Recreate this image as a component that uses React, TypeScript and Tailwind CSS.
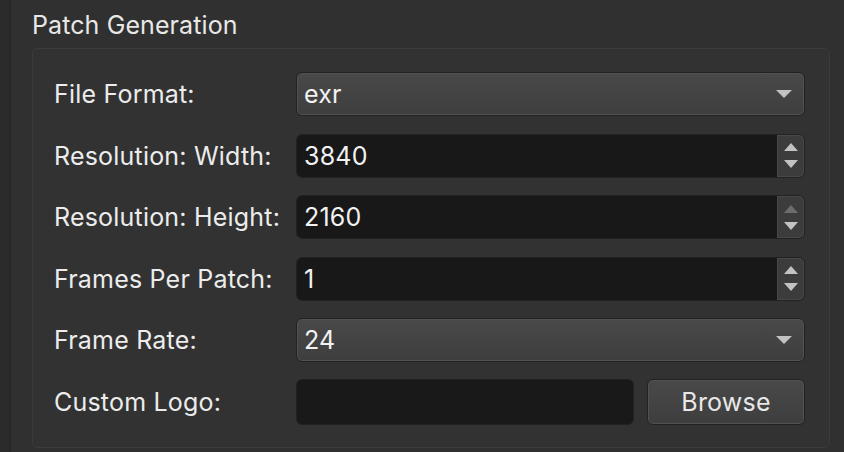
import React from "react";

const font = { fontFamily: "Inter, 'Open Sans', 'Liberation Sans', sans-serif" };

const Label: React.FC<{ text: string }> = ({ text }) => (
  <div className="w-[242px] shrink-0 text-[25px] leading-[28px] tracking-[0.2px] text-[#ececec]">{text}</div>
);

const Combo: React.FC<{ value: string }> = ({ value }) => (
  <div className="flex h-[44px] flex-1 items-center justify-between rounded-[6px] border border-[#222222] bg-gradient-to-b from-[#494949] to-[#3e3e3e] pl-[7px] pr-[12px] shadow-[inset_0_0_0_1px_#525252]">
    <span className="text-[25px] leading-[28px] tracking-[0.2px] text-[#f2f2f2]">{value}</span>
    <svg width="16" height="8" viewBox="0 0 16 8">
      <path d="M0 0 H16 L8 8 Z" fill="#c2c2c2" />
    </svg>
  </div>
);

const Spin: React.FC<{ value: string; upDisabled?: boolean }> = ({ value, upDisabled }) => (
  <div className="flex h-[44px] flex-1 overflow-hidden rounded-[6px] border border-[#222222]">
    <div className="flex flex-1 items-center bg-[#181818] pl-[7px] text-[25px] leading-[28px] tracking-[0.2px] text-[#f2f2f2]">
      {value}
    </div>
    <div className="flex w-[27px] flex-col items-center justify-center gap-[9px] rounded-r-[5px] bg-[#3c3c3c] shadow-[inset_0_0_0_1px_#484848]">
      <svg width="14" height="8" viewBox="0 0 14 8">
        <path d="M7 0 L14 8 H0 Z" fill={upDisabled ? "#6c6c6c" : "#c2c2c2"} />
      </svg>
      <svg width="14" height="8" viewBox="0 0 14 8">
        <path d="M0 0 H14 L7 8 Z" fill="#c2c2c2" />
      </svg>
    </div>
  </div>
);

const Row: React.FC<{ label: string; children: React.ReactNode }> = ({ label, children }) => (
  <div className="flex h-[44px] items-center">
    <Label text={label} />
    {children}
  </div>
);

export default function App() {
  return (
    <div className="h-[452px] w-[844px] overflow-hidden bg-[#2b2b2b]" style={font}>
      <div className="ml-[10px] h-full border-l border-[#252525] bg-[#303030] pl-[21px] pr-[14px]">
        <div className="h-[48px] pt-[11px] text-[25px] leading-[28px] tracking-[0.1px] text-[#e8e8e8]">Patch Generation</div>
        <div className="flex flex-col gap-[17.5px] rounded-[5px] border border-[#3b3b3b] bg-[#323232] pb-[23px] pl-[21px] pr-[24px] pt-[23px]">
          <Row label="File Format:">
            <Combo value="exr" />
          </Row>
          <Row label="Resolution: Width:">
            <Spin value="3840" />
          </Row>
          <Row label="Resolution: Height:">
            <Spin value="2160" upDisabled />
          </Row>
          <Row label="Frames Per Patch:">
            <Spin value="1" />
          </Row>
          <Row label="Frame Rate:">
            <Combo value="24" />
          </Row>
          <Row label="Custom Logo:">
            <div className="h-[46px] w-[338px] rounded-[6px] border border-[#222222] bg-[#191919]" />
            <div className="ml-[13px] flex h-[46px] flex-1 items-center justify-center rounded-[6px] border border-[#222222] bg-gradient-to-b from-[#494949] to-[#3e3e3e] text-[25px] leading-[28px] tracking-[0.2px] text-[#e8e8e8] shadow-[inset_0_0_0_1px_#525252]">
              Browse
            </div>
          </Row>
        </div>
      </div>
    </div>
  );
}
